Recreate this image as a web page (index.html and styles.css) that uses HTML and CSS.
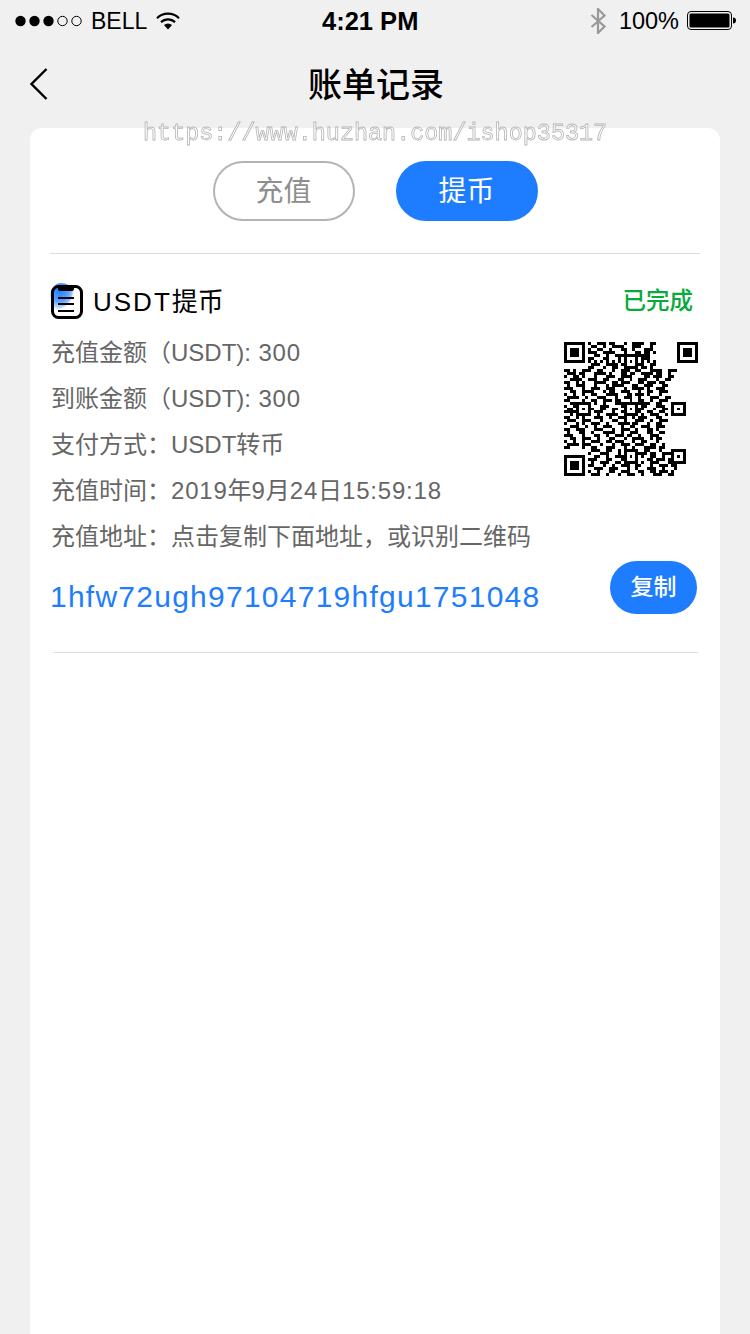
FILE: index.html
```html
<!DOCTYPE html>
<html>
	<head>
		<meta charset="utf-8" />
		<title>账单记录</title>
		<link rel="stylesheet" href="styles.css">
	</head>
	<body>
		<div id="page">
			<div id="status-bar">
				<div class="status-side">
					<svg class="signal" width="68" height="12" viewBox="0 0 68 12">
						<circle cx="5.5" cy="6" r="5.2" fill="#000" />
						<circle cx="19.5" cy="6" r="5.2" fill="#000" />
						<circle cx="33.5" cy="6" r="5.2" fill="#000" />
						<circle cx="47.5" cy="6" r="4.7" fill="none" stroke="#000" />
						<circle cx="61.5" cy="6" r="4.7" fill="none" stroke="#000" />
					</svg>
					<span class="carrier">BELL</span>
					<svg class="wifi" width="24" height="18" viewBox="0 0 24 18">
						<path d="M1 6.2a15.6 15.6 0 0 1 22 0" fill="none" stroke="#000" stroke-width="2.2" />
						<path d="M5 10.2a10 10 0 0 1 14 0" fill="none" stroke="#000" stroke-width="2.2" />
						<path d="M8 13a5.8 5.800 0 0 1 8 0l-4 4.600z" fill="#000" />
					</svg>
				</div>
				<div class="status-time">4:21 PM</div>
				<div class="status-side status-right">
					<svg class="bluetooth" width="16" height="26" viewBox="0 0 16 26">
						<path d="M1.500 7l13 11.500L8 25V1l6.500 6.500L1.500 19" fill="none" stroke="#999" stroke-width="2.200" />
					</svg>
					<span class="battery-text">100%</span>
					<svg class="battery" width="50" height="20" viewBox="0 0 50 20">
						<rect x="0.500" y="0.500" width="44" height="18" rx="3.500" fill="none" stroke="#000" />
						<rect x="2.500" y="2.500" width="40" height="14" rx="1.500" fill="#000" />
						<path d="M46 6.500c2 0 3 1.300 3 3s-1 3-3 3z" fill="#000" />
					</svg>
				</div>
			</div>

			<div id="nav">
				<svg class="back" width="20" height="34" viewBox="0 0 20 34">
					<path d="M17.500 2L2.500 17l15 15" fill="none" stroke="#000" stroke-width="2.400" />
				</svg>
				<div class="nav-title">账单记录</div>
			</div>

			<div id="card">
				<div class="tabs">
					<div class="tab">充值</div>
					<div class="tab tab-active">提币</div>
				</div>

				<div class="record">
					<div class="record-head">
						<svg class="record-icon" width="34" height="38" viewBox="0 0 34 38">
							<defs>
								<radialGradient id="glow" cx="0.4" cy="0.3" r="0.7">
									<stop offset="0" stop-color="#1e7dff" />
									<stop offset="0.6" stop-color="#5ba3ff" />
									<stop offset="1" stop-color="#dcebff" />
								</radialGradient>
							</defs>
							<path d="M2 16C0 6 6 0 12 0c6 0 11 3 12 9 0 8-8 17-15 17-4 0-6-4-7-10z" fill="url(#glow)" />
							<rect x="3.500" y="3.500" width="29" height="31" rx="6" fill="none" stroke="#000" stroke-width="3" />
							<path d="M9 2h16v4a2 2 0 0 1-2 2H11a2 2 0 0 1-2-2z" fill="#000" />
							<path d="M9 15h16M9 21h16M9 28h16" stroke="#000" stroke-width="2.200" />
						</svg>
						<div class="record-title"><span class="latin-title">USDT</span>提币</div>
						<div class="record-state">已完成</div>
					</div>

					<div class="record-body">
						<div class="lines">
							<div class="line">充值金额（USDT):<span class="num"> 300</span></div>
							<div class="line">到账金额（USDT):<span class="num"> 300</span></div>
							<div class="line">支付方式：USDT转币</div>
							<div class="line">充值时间：<span class="num">2019</span>年<span class="num">9</span>月<span class="num">24</span>日<span class="num">15:59:18</span></div>
						</div>
						<svg class="qr" width="134" height="134" viewBox="0 0 45 45" shape-rendering="crispEdges">
							<defs>
								<g id="finder">
									<rect x="-1" y="-1" width="9" height="9" fill="#fff" />
									<path d="M0 0h7v7H0zM1 1v5h5V1z" fill="#000" fill-rule="evenodd" />
									<rect x="2" y="2" width="3" height="3" fill="#000" />
								</g>
								<g id="align">
									<rect width="5" height="5" fill="#000" />
									<rect x="1" y="1" width="3" height="3" fill="#fff" />
									<rect x="2" y="2" width="1" height="1" fill="#000" />
								</g>
							</defs>
							<path stroke="#000" stroke-width="1" fill="none" d="M8 .5h1m2 0h3m1 0h2m3 0h1m2 0h4m2 0h2M9 1.500h2m2 0h1m2 0h4m3 0h3m3 0h1M8 2.500h1m2 0h2m2 0h1m3 0h2m2 0h1m3 0h3M8 3.500h3m2 0h4m3 0h1m3 0h2m1 0h2m1 0h1M10 4.500h2m2 0h1m2 0h3m2 0h1m2 0h4M8 5.500h2m3 0h2m3 0h1m2 0h2m3 0h3M8 6.500h1m1 0h1m1 0h1m1 0h1m1 0h1m1 0h1m1 0h1m1 0h1m1 0h1m1 0h1m1 0h1m1 0h1M9 7.500h3m2 0h4m1 0h3m3 0h2m2 0h2M8 8.500h2m3 0h1m2 0h2m3 0h4m1 0h2m1 0h1M0 9.500h2m1 0h1m2 0h3m2 0h2m3 0h1m2 0h3m2 0h2m3 0h4m2 0h3M1 10.500h3m1 0h2m3 0h4m1 0h1m3 0h2m1 0h2m2 0h4m1 0h2m2 0h1M0 11.500h1m2 0h2m1 0h1m3 0h1m3 0h3m2 0h4m4 0h2m1 0h3m2 0h2M2 12.500h4m2 0h3m2 0h2m3 0h2m2 0h1m2 0h3m3 0h1m2 0h2M0 13.500h2m2 0h1m1 0h1m3 0h4m2 0h2m1 0h3m3 0h2m1 0h3m1 0h2M1 14.500h1m2 0h3m3 0h1m3 0h1m1 0h4m3 0h2m2 0h3m3 0h2M0 15.500h3m3 0h1m2 0h3m2 0h3m3 0h1m2 0h4m1 0h1m2 0h3M2 16.500h2m2 0h4m3 0h1m1 0h2m2 0h3m3 0h1m2 0h2m2 0h3M0 17.500h1m2 0h1m2 0h1m2 0h2m3 0h4m3 0h2m1 0h3m1 0h1m3 0h1M1 18.500h4m2 0h1m3 0h3m3 0h1m2 0h3m2 0h1m3 0h3m2 0h2M0 19.500h2m4 0h1m2 0h2m2 0h3m1 0h2m3 0h1m2 0h2m2 0h1m2 0h3M2 20.500h3m1 0h1m3 0h1m2 0h1m3 0h4m1 0h1m2 0h4m2 0h2M0 21.500h1m2 0h1m2 0h3m3 0h3m4 0h1m3 0h2m1 0h2m3 0h3M1 22.500h2m3 0h1m2 0h1m2 0h2m2 0h2m2 0h3m2 0h2m3 0h1m2 0h2M0 23.500h4m2 0h1m3 0h3m3 0h1m2 0h1m2 0h4m2 0h2m2 0h2M2 24.500h1m3 0h3m2 0h1m2 0h4m3 0h2m3 0h1m2 0h3m2 0h1M0 25.500h2m2 0h1m1 0h1m3 0h3m2 0h1m2 0h3m2 0h1m1 0h3m3 0h2M1 26.500h3m2 0h3m3 0h1m3 0h2m2 0h1m3 0h3m2 0h1m2 0h3M0 27.500h1m3 0h1m1 0h1m2 0h3m2 0h1m3 0h4m1 0h2m3 0h1m2 0h2M2 28.500h3m2 0h1m2 0h1m2 0h3m3 0h1m2 0h2m2 0h3m2 0h3M0 29.500h2m2 0h3m3 0h3m3 0h1m2 0h3m2 0h1m3 0h2m1 0h1M1 30.500h1m3 0h2m2 0h1m3 0h4m2 0h1m2 0h3m3 0h2m2 0h2M0 31.500h3m3 0h1m3 0h2m2 0h1m2 0h3m1 0h2m2 0h1m3 0h3M2 32.500h2m2 0h3m2 0h1m3 0h2m3 0h1m2 0h4m2 0h1m1 0h2M0 33.500h1m2 0h1m2 0h1m2 0h3m2 0h2m1 0h3m3 0h1m2 0h2m3 0h1M1 34.500h4m1 0h3m3 0h1m3 0h1m2 0h3m2 0h3m2 0h2m2 0h1M0 35.500h2m4 0h1m2 0h2m3 0h3m3 0h1m2 0h1m3 0h4m1 0h2M9 36.500h3m2 0h2m2 0h1m3 0h3m2 0h2m3 0h1m3 0h3M8 37.500h1m3 0h3m3 0h1m2 0h1m3 0h3m1 0h2m2 0h3m2 0h1M10 38.500h2m2 0h1m2 0h3m2 0h2m2 0h1m2 0h2m2 0h1m3 0h2M8 39.500h3m3 0h2m3 0h1m2 0h3m3 0h2m1 0h3m1 0h3M9 40.500h1m2 0h3m2 0h2m3 0h2m2 0h1m2 0h3m3 0h1m1 0h1M8 41.500h2m3 0h1m2 0h1m2 0h3m2 0h2m3 0h1m2 0h3m1 0h2M10 42.500h3m2 0h3m3 0h1m2 0h1m3 0h3m2 0h1m3 0h1M8 43.500h1m2 0h1m3 0h2m2 0h3m3 0h2m2 0h2m1 0h3m1 0h1M9 44.500h3m2 0h1m3 0h1m2 0h3m2 0h1m3 0h3m2 0h2" />
							<use href="#finder" />
							<use href="#finder" x="38" />
							<use href="#finder" y="38" />
							<use href="#align" x="20" y="4" />
							<use href="#align" x="4" y="20" />
							<use href="#align" x="20" y="20" />
							<use href="#align" x="36" y="20" />
							<use href="#align" x="20" y="36" />
							<use href="#align" x="36" y="36" />
						</svg>
					</div>

					<div class="line line-wide">充值地址：点击复制下面地址，或识别二维码</div>

					<div class="address-row">
						<div class="address">1hfw72ugh97104719hfgu1751048</div>
						<div class="copy-btn">复制</div>
					</div>
				</div>
			</div>

			<div class="watermark">https://www.huzhan.com/ishop35317</div>
		</div>
	</body>
</html>
```

FILE: styles.css
```css
html, body {
	margin: 0px;
}

body {
	font-family: "Liberation Sans", "Noto Sans CJK SC", sans-serif;
	background-color: #f0f0f0;
}

#page {
	position: relative;
	display: flex;
	flex-direction: column;
	height: 1334px;
	overflow: hidden;
}

#status-bar {
	box-sizing: border-box;
	display: flex;
	justify-content: space-between;
	align-items: center;
	height: 40px;
	padding: 2px 13px 0px 15px;
	position: relative;
}

.status-side {
	display: flex;
	align-items: center;
}

.carrier {
	font-size: 23px;
	margin-left: 8px;
	margin-right: 9px;
}

.status-time {
	position: absolute;
	left: 322px;
	top: 6px;
	font-size: 25.500px;
	line-height: 30px;
	font-weight: bold;
}

.battery-text {
	font-size: 23.500px;
	margin-left: 13px;
	margin-right: 8px;
}

#nav {
	display: flex;
	align-items: center;
	justify-content: center;
	height: 88px;
	position: relative;
}

.back {
	position: absolute;
	left: 29px;
	top: 27px;
}

.nav-title {
	font-size: 34px;
	line-height: 46px;
	margin-top: 2px;
	margin-left: 2px;
	font-weight: 500;
}

#card {
	flex: 1;
	margin: 0px 30px;
	padding: 0px 20px;
	background-color: white;
	border-radius: 12px 12px 0px 0px;
}

.tabs {
	display: flex;
	justify-content: center;
	gap: 41px;
	padding-top: 33px;
	padding-bottom: 32px;
	border-bottom: 1px solid #dcdcdc;
}

.tab {
	box-sizing: border-box;
	width: 142px;
	height: 60px;
	border: 2px solid #b4b4b4;
	border-radius: 30px;
	color: #8e8e8e;
	font-size: 28px;
	line-height: 58px;
	text-align: center;
}

.tab-active {
	background-color: #1e7dff;
	border-color: #1e7dff;
	color: white;
}

.record {
	border-bottom: 1px solid #dcdcdc;
	margin-left: 3px;
	margin-right: 2px;
	padding-bottom: 33px;
}

.record-head {
	display: flex;
	align-items: center;
	height: 38px;
	margin-top: 26px;
	margin-left: -3px;
	padding-right: 5px;
}

.record-icon {
	margin-left: -1px;
	margin-top: 6px;
}

.record-title {
	font-size: 26px;
	margin-left: 10px;
	flex: 1;
	color: #000;
}

.latin-title {
	letter-spacing: 2px;
}

.record-state {
	font-size: 23.500px;
	font-weight: 500;
	color: #09a93b;
}

.record-body {
	display: flex;
	justify-content: space-between;
	margin-top: 18px;
}

.lines {
	display: flex;
	flex-direction: column;
	gap: 12px;
}

.line {
	font-size: 24px;
	line-height: 34px;
	color: #666;
	margin-left: -2px;
	white-space: nowrap;
}

.num {
	letter-spacing: 0.800px;
}

.qr {
	display: block;
	margin-top: 6px;
}

.line-wide {
	margin-top: 12px;
}

.address-row {
	display: flex;
	justify-content: space-between;
	align-items: flex-start;
	margin-left: -3px;
	margin-right: 1px;
	margin-top: 7px;
}

.address {
	font-size: 30px;
	line-height: 44px;
	margin-top: 14px;
	letter-spacing: 1.250px;
	color: #1e7dff;
	white-space: nowrap;
}

.copy-btn {
	width: 87px;
	height: 53px;
	border-radius: 27px;
	background-color: #1e7dff;
	color: white;
	font-size: 23px;
	font-weight: 500;
	line-height: 53px;
	text-align: center;
}

.watermark {
	position: absolute;
	left: 143px;
	top: 119px;
	font-family: "Liberation Mono", monospace;
	font-size: 23.450px;
	line-height: 30px;
	color: rgba(255, 255, 255, 0.7);
	-webkit-text-stroke: 0.8px #b5b5b5;
	white-space: nowrap;
	will-change: opacity;
}
```
